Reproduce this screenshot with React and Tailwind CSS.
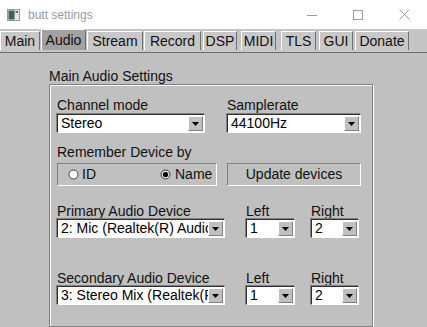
import React from "react";

const F = { fontFamily: '"Liberation Sans", Arial, sans-serif' };

function Arrow() {
  return (
    <div className="shrink-0 w-[15px] my-[1px] mr-[1px] bg-[#c0c0c0] border border-t-white border-l-white border-b-[#808080] border-r-[#808080] flex items-center justify-center">
      <svg width="7" height="4" viewBox="0 0 7 4"><polygon points="0,0 7,0 3.5,4" fill="#000" /></svg>
    </div>
  );
}

function Choice({ w, text }) {
  return (
    <div className={`${w} h-[19px] flex bg-white border border-t-[#303030] border-l-[#303030] border-b-white border-r-white shadow-[-1px_-1px_0_#808080]`}>
      <div className="flex-1 overflow-hidden whitespace-nowrap pl-[3px] text-[14px] leading-[17px] text-black">{text}</div>
      <Arrow />
    </div>
  );
}

function Label({ children }) {
  return <div className="text-[14px] leading-[16px] h-[16px] text-[#111] whitespace-nowrap">{children}</div>;
}

function Radio({ on }) {
  return (
    <svg width="11" height="11" viewBox="0 0 11 11" className="shrink-0">
      <circle cx="5.5" cy="5.5" r="4.5" fill={on ? "#d8d8d8" : "#fff"} stroke="#404040" strokeWidth="1" />
      {on && <circle cx="5.5" cy="5.5" r="2.6" fill="#000" />}
    </svg>
  );
}

const tabs = [
  ["Main", "w-[40px]", "mr-[1px]"],
  ["Audio", "w-[45px]", "mr-[1px]"],
  ["Stream", "w-[56px]", "mr-[1px]"],
  ["Record", "w-[57px]", "mr-[2px]"],
  ["DSP", "w-[34px]", "mr-[4px]"],
  ["MIDI", "w-[35px]", "mr-[5px]"],
  ["TLS", "w-[35px]", "mr-[3px]"],
  ["GUI", "w-[34px]", "mr-[2px]"],
  ["Donate", "w-[54px]", ""],
];

export default function App() {
  return (
    <div className="w-[427px] h-[327px] overflow-hidden bg-[#c0c0c0] flex flex-col" style={F}>
      {/* title bar */}
      <div className="h-[29px] bg-white flex items-center shrink-0">
        <svg width="13" height="12" viewBox="0 0 13 12" className="ml-[7px]">
          <rect x="0.5" y="0.5" width="12" height="11" fill="#e4e4e4" stroke="#9a9a9a" />
          <rect x="1.5" y="1.5" width="6" height="9" fill="#3f6157" />
          <rect x="8.5" y="2" width="2.5" height="2" fill="#6a6a6a" />
        </svg>
        <span className="ml-[8px] text-[12px] text-[#9a9a9a]">butt settings</span>
        <div className="flex-1" />
        <svg width="10" height="10" viewBox="0 0 10 10" className="mr-[36px]"><line x1="0" y1="5.5" x2="10" y2="5.5" stroke="#9a9a9a" /></svg>
        <svg width="10" height="10" viewBox="0 0 10 10" className="mr-[36px]"><rect x="0.5" y="0.5" width="9" height="9" fill="none" stroke="#9a9a9a" /></svg>
        <svg width="11" height="11" viewBox="0 0 11 11" className="mr-[17px]"><path d="M0.5 0.5 L10.5 10.5 M10.5 0.5 L0.5 10.5" stroke="#9a9a9a" /></svg>
      </div>
      {/* tabs */}
      <div className="h-[21px] flex items-end shrink-0 bg-[#c4c4c4]">
        {tabs.map(([t, w, m]) => {
          const sel = t === "Audio";
          return (
            <div
              key={t}
              className={`${w} ${m} ${sel ? "h-[21px] bg-[#a2a2a2]" : "h-[19px] bg-[#c8c8c8]"} shrink-0 flex items-center justify-center border-t border-l border-t-white border-l-white border-r border-r-[#707070] text-[14px] leading-[16px] text-[#111]`}
            >
              {t}
            </div>
          );
        })}
      </div>
      <div className="h-[2px] bg-[#c8c8c8] shrink-0" />
      <div className="h-[1px] bg-[#6c6c6c] shrink-0" />
      {/* body */}
      <div className="flex-1 pl-[49px] pt-[15px] flex flex-col">
        <div className="text-[14px] leading-[16px] h-[16px] text-[#111]">Main Audio Settings</div>
        <div className="w-[324px] flex-1 border border-[#808080] shadow-[inset_1px_1px_0_#fff,1px_1px_0_#fff] pl-[7px] pt-[12px] flex flex-col">
          {/* row 1 */}
          <div className="flex">
            <div className="w-[148px] flex flex-col">
              <Label>Channel mode</Label>
              <div className="mt-[1px]"><Choice w="w-[148px]" text="Stereo" /></div>
            </div>
            <div className="ml-[22px] w-[134px] flex flex-col">
              <Label>Samplerate</Label>
              <div className="mt-[1px]"><Choice w="w-[134px]" text="44100Hz" /></div>
            </div>
          </div>
          {/* row 2 */}
          <div className="flex items-end mt-[11px]">
            <div className="w-[160px] flex flex-col">
              <Label>Remember Device by</Label>
              <div className="mt-[3px] h-[23px] border border-t-[#808080] border-l-[#808080] border-b-white border-r-white flex items-center pl-[10px] text-[14px] text-[#111]">
                <Radio on={false} />
                <span className="ml-[3px]">ID</span>
                <span className="ml-[64px] flex items-center">
                  <Radio on={true} />
                  <span className="ml-[4px]">Name</span>
                </span>
              </div>
            </div>
            <div className="ml-[10px] w-[134px] h-[23px] border border-t-[#808080] border-l-[#808080] border-b-white border-r-white flex items-center justify-center text-[14px] text-[#111]">
              Update devices
            </div>
          </div>
          {/* row 3 */}
          <div className="flex mt-[17px]">
            <div className="w-[168px] flex flex-col">
              <Label>Primary Audio Device</Label>
              <Choice w="w-[168px]" text="2: Mic (Realtek(R) Audio)" />
            </div>
            <div className="ml-[21px] w-[49px] flex flex-col">
              <Label>Left</Label>
              <Choice w="w-[49px]" text="1" />
            </div>
            <div className="ml-[16px] w-[48px] flex flex-col">
              <Label>Right</Label>
              <Choice w="w-[48px]" text="2" />
            </div>
          </div>
          {/* row 4 */}
          <div className="flex mt-[32px]">
            <div className="w-[168px] flex flex-col">
              <Label>Secondary Audio Device</Label>
              <Choice w="w-[168px]" text="3: Stereo Mix (Realtek(R) Audio)" />
            </div>
            <div className="ml-[21px] w-[49px] flex flex-col">
              <Label>Left</Label>
              <Choice w="w-[49px]" text="1" />
            </div>
            <div className="ml-[16px] w-[48px] flex flex-col">
              <Label>Right</Label>
              <Choice w="w-[48px]" text="2" />
            </div>
          </div>
        </div>
      </div>
    </div>
  );
}
